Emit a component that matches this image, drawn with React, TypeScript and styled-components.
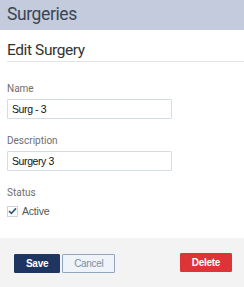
import React from 'react'
import styled, { createGlobalStyle } from 'styled-components'

const GlobalStyle = createGlobalStyle`
    html, body {
        margin: 0;
        padding: 0;
        background: #ffffff;
    }
    * {
        box-sizing: border-box;
    }
`;

const Page = styled.div`
    width: 244px;
    height: 287px;
    display: flex;
    flex-direction: column;
    overflow: hidden;
    font-family: Roboto, "Liberation Sans", sans-serif;
`;

const Header = styled.header`
    height: 30px;
    flex-shrink: 0;
    background: #c3cbdc;
    color: #3a4556;
    padding-left: 7px;
    font-size: 17.5px;
    letter-spacing: -0.4px;
    line-height: 28px;
`;

const Body = styled.div`
    flex: 1;
    padding: 10px 0 0 7px;
`;

const Title = styled.h1`
    margin: 0 0 21px;
    padding-bottom: 1px;
    font-size: 15.5px;
    font-weight: 400;
    letter-spacing: -0.4px;
    line-height: 20px;
    color: #333333;
    border-bottom: 1px solid #e4e4e4;
`;

const Field = styled.div`
    display: flex;
    flex-direction: column;
    align-items: flex-start;
    margin-bottom: 16px;
`;

const Label = styled.label`
    font-size: 10px;
    line-height: 12px;
    color: #6f6f6f;
    margin-bottom: 4px;
`;

const TextInput = styled.input`
    width: 165px;
    height: 20px;
    margin: 0;
    padding: 0 4px;
    border: 1px solid #d3dde8;
    border-radius: 1px;
    background: #ffffff;
    font-family: "Liberation Sans", Arial, sans-serif;
    font-size: 10.5px;
    letter-spacing: -0.4px;
    color: #111111;
    outline: none;
`;

const CheckRow = styled.label`
    display: flex;
    align-items: center;
    gap: 4px;
    margin-top: 2px;
    font-family: "Liberation Sans", Arial, sans-serif;
    font-size: 10.5px;
    letter-spacing: -0.2px;
    color: #555555;
`;

const Box = styled.span`
    width: 11px;
    height: 11px;
    border: 1px solid #cbd4de;
    background: #ffffff;
    display: flex;
    align-items: center;
    justify-content: center;
`;

const Footer = styled.footer`
    flex-shrink: 0;
    background: #f3f3f3;
    padding: 16px 12px 14px 14px;
    display: flex;
    align-items: center;
    gap: 2px;
`;

const Button = styled.button<{ variant: 'primary' | 'secondary' | 'danger' }>`
    height: 19px;
    padding: 0 11px;
    margin: 0;
    border-radius: 1px;
    font-family: "Liberation Sans", Arial, sans-serif;
    font-size: 10px;
    letter-spacing: -0.3px;
    cursor: pointer;
    ${props => props.variant === 'primary' && `
        background: #1e3561;
        border: 1px solid #1e3561;
        color: #ffffff;
        font-weight: bold;
    `}
    ${props => props.variant === 'secondary' && `
        background: #eff4fa;
        border: 1px solid #8fa6bd;
        color: #7b8ea3;
    `}
    ${props => props.variant === 'danger' && `
        background: #dc3437;
        border: 1px solid #dc3437;
        color: #ffffff;
        font-weight: bold;
        margin-left: auto;
        margin-top: -2px;
    `}
`;

const App = () => {
    return (
        <>
            <GlobalStyle />
            <Page>
                <Header>Surgeries</Header>
                <Body>
                    <Title>Edit Surgery</Title>
                    <Field>
                        <Label>Name</Label>
                        <TextInput defaultValue="Surg - 3" />
                    </Field>
                    <Field>
                        <Label>Description</Label>
                        <TextInput defaultValue="Surgery 3" />
                    </Field>
                    <Field>
                        <Label>Status</Label>
                        <CheckRow>
                            <Box>
                                <svg width="9" height="8" viewBox="0 0 9 8">
                                    <path d="M1 4.2 L3.4 6.4 L8 1.4" fill="none" stroke="#35577f" strokeWidth="1.6" />
                                </svg>
                            </Box>
                            Active
                        </CheckRow>
                    </Field>
                </Body>
                <Footer>
                    <Button variant="primary">Save</Button>
                    <Button variant="secondary">Cancel</Button>
                    <Button variant="danger">Delete</Button>
                </Footer>
            </Page>
        </>
    );
};

export default App;
